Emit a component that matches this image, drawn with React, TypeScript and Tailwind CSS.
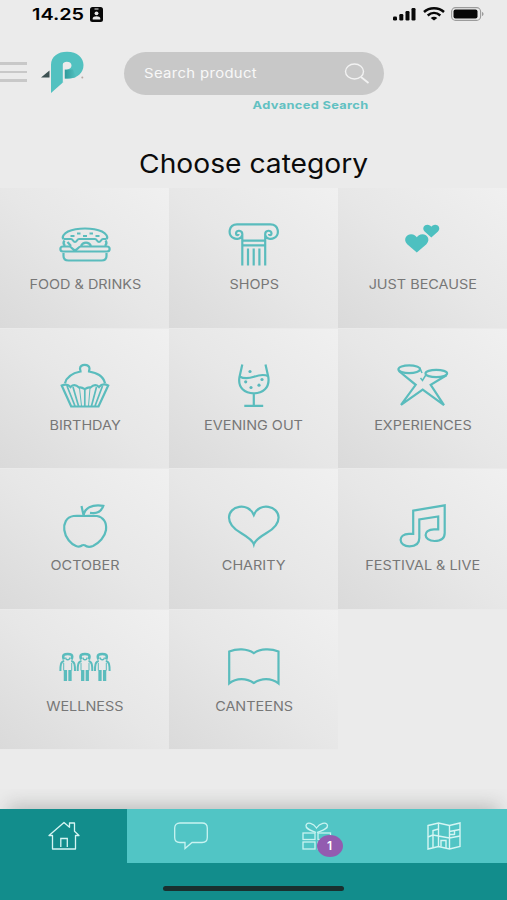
import type { ReactNode } from 'react';

interface Category {
  label: string;
  icon: ReactNode;
}

// All category drawings share a 60x56 canvas
const categories: Category[] = [
  {
    label: 'FOOD & DRINKS',
    icon: (
      <>
        <path d="M8.500 22C6.500 20 9 16.500 13 14.500C22 10.500 38 10.500 47 14.500C51 16.500 53.500 20 51.500 22" />
        <path d="M8.500 22H16C18 22 18 25 20 25C22 25 22 22 24 22H40C42 22 42 25 44 25C46 25 46 22 48 22H51.500" />
        <path d="M9.500 23.500C7.500 26 8.500 27.500 10 29M50.500 23.500C52.500 26 51.500 27.500 50 29M12.500 25L16 29M26 29C28 24.500 34 24.500 36 29" />
        <path d="M8 29.500H14C17 29.500 17 33 20 33C23 33 23 29.500 26 29.500H52C55.500 29.500 55.500 34.500 52 34.500H8C4.500 34.500 4.500 29.500 8 29.500Z" />
        <path d="M8.500 36V39C8.500 42 10.500 43.500 13.500 43.500H46.500C49.500 43.500 51.500 42 51.500 39V36" />
        <path d="M15.500 19H19.500M22 16.500H25.500M28 19H32M34.500 16.500H38M40.500 19H44.500" strokeWidth="2.200" />
      </>
    ),
  },
  {
    label: 'SHOPS',
    icon: (
      <>
        <path d="M18.300 48.500V17C18.300 13 12 12.500 12 16.500C12 18.500 14.500 18.500 14.500 17M18.300 18C17 22.500 12 22.500 9.500 21C3.500 18 4.500 7.300 13 7.300H46.500C55 7.300 56 18 50 21C47.500 22.500 42.500 22.500 41.200 18M41.200 48.500V17C41.200 13 47.500 12.500 47.500 16.500C47.500 18.500 45 18.500 45 17" />
        <path d="M18.300 23.700H41.200M18.300 28.300H41.200M24 31.500V48.500M29.700 31.500V48.500M35.400 31.500V48.500" />
      </>
    ),
  },
  {
    label: 'JUST BECAUSE',
    icon: (
      <g fill="#4dc0c0" stroke="none">
        <path d="M23.800 35.500L14.200 27.200C9.500 22 14 17.300 18 17.300C21 17.300 22.800 18.800 23.800 20.300C24.800 18.800 26.600 17.300 29.600 17.300C33.600 17.300 38.100 22 33.400 27.200Z" />
        <path d="M38.300 20.500L31.600 14.500C28.500 11 31.500 7.600 34.300 7.700C36.400 7.700 37.600 8.800 38.300 9.800C39 8.800 40.200 7.700 42.300 7.700C45.100 7.600 48.100 11 45 14.500Z" />
      </g>
    ),
  },
  {
    label: 'BIRTHDAY',
    icon: (
      <>
        <path d="M10 25.200C12 17.500 18 15 25.500 13.500C25.500 12 25 11.500 25 10.500C25.500 5.700 34 5.700 34.500 10.500C34.500 11.500 34 12 34 13.500C42 15 48 17.500 50 25.200" />
        <path d="M6.700 27.500C10 26 13 26 15.500 29C18 26.500 21 26.500 24 29.500C26 29 28 30 29.800 31.200C31.500 30 33.500 29 35.500 29.500C38.500 26.500 41.500 26.500 44 29C46.500 26 50 26 53.200 27.500L43.500 48.500H16.200Z" />
        <path d="M12 28L20 48M18 29L23.500 48M41.500 29L36.500 48M47.500 28L40 48M29.800 32V48" strokeWidth="1.700" />
        <path d="M24.500 30L26.500 48M35 30L33.500 48" strokeWidth="1" />
      </>
    ),
  },
  {
    label: 'EVENING OUT',
    icon: (
      <>
        <path d="M18.300 6.500L15.500 19C13.500 30 21 35.300 29.800 35.300C38.500 35.300 46 30 44.300 19L41.500 6.500M29.800 35.300V47.800M20.300 47.800H39.200" />
        <path d="M15.500 18.500C20 21 25 20.500 30 18.800C35 17 40 16 44.300 18.300" />
        <g fill="#5bb9bd" stroke="none">
          <circle cx="26" cy="13.500" r="1.600" />
          <circle cx="21.700" cy="23.800" r="1.600" />
          <circle cx="38" cy="21.500" r="1.600" />
          <circle cx="27" cy="29.500" r="1.600" />
          <circle cx="35" cy="27.200" r="1.600" />
        </g>
      </>
    ),
  },
  {
    label: 'EXPERIENCES',
    icon: (
      <>
        <ellipse cx="16.200" cy="11.200" rx="10.800" ry="3.900" />
        <ellipse cx="43.300" cy="15.500" rx="10.800" ry="3.700" />
        <path d="M5.800 13L22.700 26.800L8 46.800L29.700 31.500L51 47.200L37.700 26.800L53.500 17.300" />
        <path d="M26.700 9.500L29 15M32.800 17L29.500 22.500L27.500 20" strokeWidth="1.500" />
      </>
    ),
  },
  {
    label: 'OCTOBER',
    icon: (
      <>
        <path d="M28.700 18C24 18 22 17.500 18.500 18C11 19 8.500 26 9.300 32C10.300 40 16 46 21 48C24 49.300 26 48.500 27.500 47.200C28 47 29 47 29.500 47.200C32 49.300 35 49.300 38 48C44 45 50 39 51 32C52 24 48 19 42 18C37.500 17.500 34 18 28.700 18Z" />
        <path d="M26.500 8L28.700 18C29 10 37 6 48.300 7.800C46.500 13 42.500 15.500 37 15L35 14.800" />
      </>
    ),
  },
  {
    label: 'CHARITY',
    icon: (
      <path d="M29.800 46.300C28.500 42 22 38 17 35C9 30.500 5 25 5 19.500C5 8 24 3.500 29.800 17C35.500 3.500 54.600 8 54.600 19.500C54.600 25 50.500 30.500 42.500 35C37.500 38 31 42 29.800 46.300Z" />
    ),
  },
  {
    label: 'FESTIVAL & LIVE',
    icon: (
      <path d="M20.200 12.700L51.700 7.300V35C51.700 40 48 43 41.500 43C30 43 29.500 31.300 41 31.300H45.200V18.500L26.300 21.500V40C26.300 45 23 48.300 16.500 48.300C5 48.300 4.500 35.800 16 35.800H20.200Z" />
    ),
  },
  {
    label: 'WELLNESS',
    icon: (
      <>
        {[12.7, 30, 47.3].map(x => (
          <g key={x} transform={`translate(${x} 0)`}>
            <path d="M-3.800 20.500C-6 15 -2.500 15 0 15C2.500 15 6 15 3.800 20.500" strokeWidth="2.600" />
            <path d="M-2 18.500C-2 21.500 2 21.500 2 18.500" strokeWidth="1.300" />
            <path d="M-3.500 22C-7 22.500 -7.300 26 -7.300 32M3.500 22C7 22.500 7.300 26 7.300 32" strokeWidth="2" />
            <path d="M-4 24V31.500M4 24V31.500" strokeWidth="1" />
            <path d="M-2.300 31V42M2.300 31V42" strokeWidth="3.300" />
          </g>
        ))}
      </>
    ),
  },
  {
    label: 'CANTEENS',
    icon: (
      <path d="M5.200 44.500V12.500C13 9.500 23 9.500 29.800 14.200C36.500 9.500 47 9.500 54.500 12.500V44.500C47 38.500 37 39 29.800 44C22.500 39 12.500 38.500 5.200 44.500Z" />
    ),
  },
];

function StatusBar() {
  return (
    <div className="flex h-7 items-center justify-between pr-[23px] pl-[32px]">
      <div className="flex items-center gap-[5px]">
        <span className="w-[53px] text-[16px] font-semibold text-black">
          <span className="inline-block origin-left scale-x-[1.24]">14.25</span>
        </span>
        <svg className="h-[15px] w-[13px]" viewBox="0 0 13 15">
          <rect width="13" height="15" rx="2.500" fill="#080808" />
          <path d="M4.500 2H8.500" stroke="#ebebeb" strokeWidth="1" />
          <circle cx="6.500" cy="6.300" r="1.900" fill="#ebebeb" />
          <path d="M2.700 12.500V11.500C2.700 8.500 10.300 8.500 10.300 11.500V12.500Z" fill="#ebebeb" />
        </svg>
      </div>
      <div className="flex items-center gap-[6.500px]">
        <svg className="h-[14px] w-[23px]" viewBox="0 0 23 14" fill="#080808">
          <rect x="0" y="9.500" width="4" height="4" rx="1.200" />
          <rect x="6.300" y="7" width="4" height="6.500" rx="1.200" />
          <rect x="12.500" y="4" width="4" height="9.500" rx="1.200" />
          <rect x="18.500" y="1" width="4" height="12.500" rx="1.200" />
        </svg>
        <svg className="h-[14px] w-[22px]" viewBox="0 0 22 14" fill="none" stroke="#080808" strokeWidth="2.500">
          <path d="M1 5C6.500 0 15.500 0 21 5" />
          <path d="M4.700 8.500C8.500 5.200 13.500 5.200 17.300 8.500" />
          <path d="M11 13.500L7.700 10.900C9.500 9.500 12.500 9.500 14.300 10.900Z" fill="#080808" stroke="none" />
        </svg>
        <svg className="h-[14px] w-[33px]" viewBox="0 0 33 14">
          <rect x="0.600" y="0.600" width="29" height="12.800" rx="4" fill="none" stroke="#9b9b9b" strokeWidth="1.100" />
          <rect x="2.500" y="2.500" width="24" height="9" rx="2" fill="#080808" />
          <path d="M31 5C33 5.500 33 8.500 31 9Z" fill="#9b9b9b" />
        </svg>
      </div>
    </div>
  );
}

function Header() {
  return (
    <header className="flex h-[112px] items-start">
      <div className="mt-[34px] flex w-[27px] flex-col gap-[6px]">
        <div className="h-[2.700px] bg-[#c8c8c8]" />
        <div className="h-[2.700px] bg-[#c8c8c8]" />
        <div className="h-[2.700px] bg-[#c8c8c8]" />
      </div>
      <svg className="mt-[23px] ml-[13px] h-[43px] w-[45px]" viewBox="0 0 45 43">
        <defs>
          <linearGradient id="fold" x1="0" x2="1">
            <stop offset="0" stopColor="#2f9a9a" />
            <stop offset="1" stopColor="#52c1c0" />
          </linearGradient>
        </defs>
        <path d="M1 26.500L9.500 19.500V26.500Z" fill="#3d5152" />
        <path d="M11 42V14C11 5.500 18 0.800 27 0.800C37.500 0.800 43.500 7 43.500 14C43.500 22 37 27.500 29 27.500H24V30.500Z" fill="#52c1c0" />
        <path d="M24.500 18.500H33L36 26C33 27.500 28 27.500 24.500 27.500Z" fill="url(#fold)" />
        <path d="M22.800 32V13.500C22.800 9.800 31.500 9.800 31.500 14.300C31.500 17.500 28.500 18.700 24.700 18.500V30Z" fill="#ebebeb" />
        <circle cx="42.300" cy="26.500" r="1" fill="#b9a9a4" />
      </svg>
      <div className="mt-[24px] ml-[39px] w-[260px]">
        <div className="flex h-[43px] items-center justify-between rounded-full bg-[#c8c8c8] pr-[14px] pl-[20px]">
          <span className="origin-left scale-x-[1.145] text-[13px] tracking-[0.3px] text-[#f8f8f8]">Search product</span>
          <svg className="h-[21px] w-[26px]" viewBox="0 0 26 21" fill="none" stroke="#f2f2f2" strokeWidth="1.400">
            <ellipse cx="10.500" cy="8.500" rx="9" ry="7.500" />
            <path d="M17 14L24.500 20" strokeWidth="1.800" />
          </svg>
        </div>
        <div className="mt-[2px] flex justify-end pr-[15.500px]">
          <span className="origin-right scale-x-[1.165] text-[11px] leading-4 font-bold tracking-[0.3px] text-[#62c1c2]">Advanced Search</span>
        </div>
      </div>
    </header>
  );
}

function CategoryTile({ label, icon }: Category) {
  return (
    <div className="flex flex-col items-center border-b border-[#eaeaea] bg-linear-to-tr from-[#dadada] via-[#e7e7e7] to-[#f0f0f0] pt-[29px]">
      <svg className="h-[56px] w-[60px]" viewBox="0 0 60 56" fill="none" stroke="#5abcbd" strokeWidth="2.200">
        {icon}
      </svg>
      <span className="mt-[2px] ml-px scale-x-[1.11] text-[13px] leading-[18px] whitespace-nowrap text-[#777777]">{label}</span>
    </div>
  );
}

function BottomNav() {
  return (
    <nav className="relative h-[91px] bg-[#128d8c]">
      <div className="absolute inset-x-0 -top-5 h-5 overflow-hidden">
        <div className="mx-3 mt-5 h-5 shadow-[0_0_18px_4px_rgba(130,134,130,0.45)]" />
      </div>
      <div className="relative grid h-[54px] grid-cols-4 bg-[#51c5c5]">
        <div className="flex items-start justify-center bg-[#128d8c] pt-[12px] pl-px">
          <svg className="h-[30px] w-[32px]" viewBox="0 0 32 30" fill="none" stroke="#d5f5f3" strokeWidth="1.300">
            <path d="M4.500 14.500H1L16 1.500L21.500 6.200V2H26.500V10.300L31 14.500H27.500V28H4.500Z" strokeLinejoin="round" />
            <path d="M12.800 26V17.500H19.300V26" />
          </svg>
        </div>
        <div className="flex items-start justify-center pt-[13px] pl-px">
          <svg className="h-[28px] w-[34px]" viewBox="0 0 34 28" fill="none" stroke="#c9f3f1" strokeWidth="1.300">
            <path d="M6 1H28C31.500 1 33.300 3 33.300 6V15.500C33.300 18.500 31.500 20.500 28 20.500H18L11 26.500V20.500H6C2.500 20.500 0.700 18.500 0.700 15.500V6C0.700 3 2.500 1 6 1Z" />
          </svg>
        </div>
        <div className="relative flex items-start justify-center pt-[13px]">
          <svg className="h-[28px] w-[30px]" viewBox="0 0 30 28" fill="none" stroke="#c9f3f1" strokeWidth="1.300">
            <path d="M14 10.500C9 8.500 3.500 7 4 3.500C5 -1 11.500 1.500 14.500 6C17.500 1.500 24.500 -1 25.500 3.500C26 7 20 8.500 15 10.500" />
            <rect x="1" y="11" width="12" height="6.500" />
            <rect x="16" y="11" width="12.500" height="6.500" />
            <rect x="1" y="20" width="12" height="7" />
            <rect x="16" y="20" width="12" height="7" />
          </svg>
          <span className="absolute top-[26px] left-[63px] flex h-[22px] w-[26px] items-center justify-center rounded-[50%] bg-[#935bb0] text-[12px] font-semibold text-white">
            1
          </span>
        </div>
        <div className="flex items-start justify-center pt-[13px]">
          <svg className="h-[28px] w-[34px]" viewBox="0 0 34 28" fill="none" stroke="#d5f5f3" strokeWidth="1.400">
            <path d="M1 3.500L11.500 1L22.500 3.500L33 1V24.500L22.500 27L11.500 24.500L1 27Z" />
            <path d="M11.500 1V24.500M22.500 3.500V27M1 15L6 13V8.500L11.500 7M6 13L22.500 16L33 14M6 14V25.500M14 24.500V18.500H19V26M22.500 9.500L33 7.500M27.500 8.500V13M22.500 12.500H27.500" />
          </svg>
        </div>
      </div>
      <div className="mx-auto mt-[23px] h-[5px] w-[181px] rounded-full bg-[#19302f]" />
    </nav>
  );
}

export default function App() {
  return (
    <div className="flex h-[900px] w-[507px] flex-col overflow-hidden bg-[#ebebeb] font-['Inter',sans-serif]">
      <StatusBar />
      <Header />
      <h1 className="flex h-[48px] items-center justify-center">
        <span className="scale-x-[1.085] text-[26px] leading-none text-[#0b0b0b]">Choose category</span>
      </h1>
      <main className="grid h-[562px] grid-cols-3 grid-rows-4">
        {categories.map(category => (
          <CategoryTile key={category.label} {...category} />
        ))}
      </main>
      <div className="flex-1" />
      <BottomNav />
    </div>
  );
}
